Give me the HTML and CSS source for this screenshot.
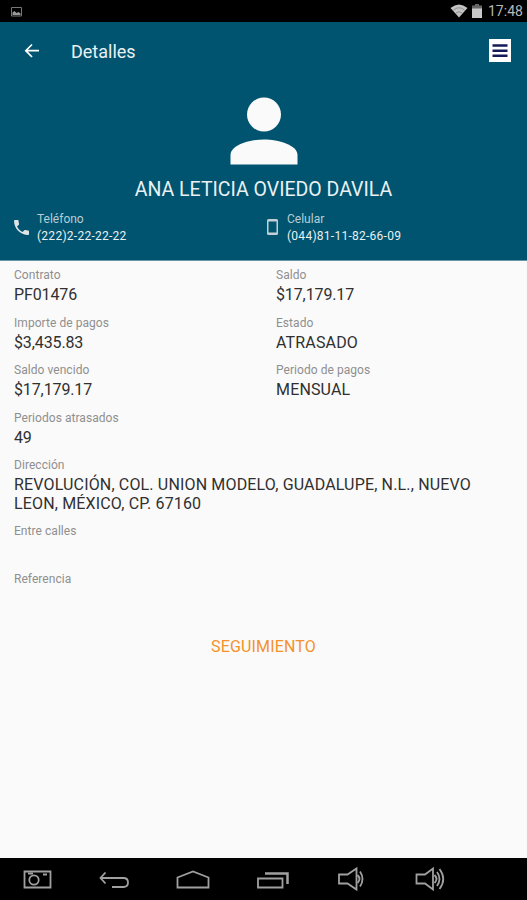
FILE: index.html
```html
<!DOCTYPE html>
<html lang="es">
<head>
    <meta charset="UTF-8">
    <meta name="viewport" content="width=device-width, initial-scale=1.0">
    <title>Detalles</title>
    <link rel="stylesheet" href="styles.css">
</head>
<body>

    <!-- Status bar -->
    <div class="status-bar">
        <svg class="status-picture" width="11" height="10" viewBox="0 0 11 10">
            <path d="M.5 .5h10v8.500h-10z" fill="none" stroke="#777"/>
            <path d="M1.500 8V5.500l2-1.500 2 2 2-1 2 1.500V8z" fill="#999"/>
        </svg>
        <svg class="status-wifi" width="18" height="14" viewBox="0 0 18 14">
            <path d="M9 13.500L.5 4Q9-3 17.500 4z" fill="#c4c4c4"/>
            <path d="M3.500 6Q9 1.500 14.500 6M6 9Q9 6.500 12 9" fill="none" stroke="#777" stroke-width=".7"/>
        </svg>
        <svg class="status-battery" width="10" height="14" viewBox="0 0 10 14">
            <path d="M3 0h4v1.500h3V5H0V1.500h3z" fill="#666"/>
            <path d="M0 4.500h10V14H0z" fill="#c8c8c8"/>
        </svg>
        <span class="clock">17:48</span>
    </div>

    <!-- Header with the client data -->
    <header class="header">
        <div class="toolbar">
            <svg class="back-icon" width="16" height="16" viewBox="0 0 16 16">
                <path d="M15 7.700H2M8 1.500L1.800 7.700 8 14" fill="none" stroke="#fff" stroke-width="1.700"/>
            </svg>
            <h1>Detalles</h1>
            <svg class="menu-icon" width="22" height="23" viewBox="0 0 22 23">
                <path d="M0 0h22v23H0z" fill="#fff"/>
                <path d="M3.500 6.500h15M3.500 11.700h15M3.500 16.800h15" stroke="#141c58" stroke-width="2.400"/>
            </svg>
        </div>

        <svg class="avatar" width="68" height="68" viewBox="0 0 68 68">
            <circle cx="34" cy="17.500" r="17" fill="#fafafa"/>
            <path d="M.5 67.500V58C.5 48 20 42.500 34 42.500S67.500 48 67.500 58v9.500z" fill="#fafafa"/>
        </svg>
        <h2>ANA LETICIA OVIEDO DAVILA</h2>

        <div class="phones">
            <div class="phone">
                <svg class="phone-icon" width="15" height="15" viewBox="3 3 18 18">
                    <path d="M6.620 10.790c1.440 2.830 3.760 5.140 6.590 6.590l2.200-2.200c.270-.270.670-.360 1.020-.240 1.120.370 2.330.570 3.570.570.550 0 1 .450 1 1V20c0 .550-.450 1-1 1C10.610 21 3 13.390 3 4c0-.550.450-1 1-1h3.500c.550 0 1 .450 1 1 0 1.250.200 2.450.570 3.570.110.350.030.740-.250 1.020z" fill="#dfe4e7"/>
                </svg>
                <div>
                    <div class="phone-label">Teléfono</div>
                    <div class="phone-number">(222)2-22-22-22</div>
                </div>
            </div>
            <div class="phone">
                <svg class="cell-icon" width="11" height="16" viewBox="0 0 11 16">
                    <path d="M1.500 0h8Q11 0 11 1.500v13Q11 16 9.500 16h-8Q0 16 0 14.500v-13Q0 0 1.500 0zM1.500 2.500v11h8v-11z" fill="#c3cfd4" fill-rule="evenodd"/>
                </svg>
                <div>
                    <div class="phone-label">Celular</div>
                    <div class="phone-number">(044)81-11-82-66-09</div>
                </div>
            </div>
        </div>
    </header>

    <!-- Contract details -->
    <main class="details">
        <div class="field">
            <div class="label">Contrato</div>
            <div class="value number">PF01476</div>
        </div>
        <div class="field">
            <div class="label">Saldo</div>
            <div class="value number">$17,179.17</div>
        </div>
        <div class="field">
            <div class="label">Importe de pagos</div>
            <div class="value number">$3,435.83</div>
        </div>
        <div class="field">
            <div class="label">Estado</div>
            <div class="value">ATRASADO</div>
        </div>
        <div class="field">
            <div class="label">Saldo vencido</div>
            <div class="value number">$17,179.17</div>
        </div>
        <div class="field">
            <div class="label">Periodo de pagos</div>
            <div class="value">MENSUAL</div>
        </div>
        <div class="field wide">
            <div class="label">Periodos atrasados</div>
            <div class="value number">49</div>
        </div>
        <div class="field wide">
            <div class="label">Dirección</div>
            <div class="value">REVOLUCIÓN, COL. UNION MODELO, GUADALUPE, N.L., NUEVO<br>LEON, MÉXICO, CP. 67160</div>
        </div>
        <div class="field wide">
            <div class="label">Entre calles</div>
            <div class="value"></div>
        </div>
        <div class="field wide">
            <div class="label">Referencia</div>
            <div class="value"></div>
        </div>
        <button type="button" class="follow-button wide">SEGUIMIENTO</button>
    </main>

    <!-- Navigation bar -->
    <nav class="nav-bar">
        <svg width="40" height="42" viewBox="0 0 40 42">
            <path d="M6.500 13.500h26v16h-26z"/>
            <circle cx="16" cy="22" r="4.700"/>
            <path d="M10 15.500h5M25 16.500h4" stroke-width="2"/>
        </svg>
        <svg width="40" height="42" viewBox="0 0 40 42">
            <path d="M9.500 14.500L4.500 20l5 5.500M5 20h22.500q4.500 0 4.500 4.500T27.500 29H16"/>
        </svg>
        <svg width="40" height="42" viewBox="0 0 40 42">
            <path d="M3.500 29.500V19.500L19 13.500l15.500 6v10z"/>
        </svg>
        <svg width="40" height="42" viewBox="0 0 40 42">
            <path d="M6 20.500h24.500v9H6z"/>
            <path d="M13 15.500h22.500V26" stroke-width="2.500"/>
        </svg>
        <svg width="40" height="42" viewBox="0 0 40 42">
            <path d="M9 16.500h8.500l9-6v21l-9-6H9z"/>
            <path d="M27.500 17q4 4 0 8M30 13.500q5 7.500 0 15"/>
        </svg>
        <svg width="40" height="42" viewBox="0 0 40 42">
            <path d="M8.500 16.500H17l8-6v21l-8-6H8.500z"/>
            <path d="M26.500 17q4 4 0 8M29 14q5 7 0 14M31.500 11q7.500 10 0 20"/>
        </svg>
    </nav>

</body>
</html>
```

FILE: styles.css
```css
* {
    box-sizing: border-box;
}

body {
    display: flex;
    flex-direction: column;
    height: 900px;
    margin: 0;
    background-color: #fafafa;
    font-family: Roboto, "Liberation Sans", sans-serif;
    overflow: hidden;
}

/* Status bar */
.status-bar {
    display: flex;
    align-items: flex-start;
    height: 22px;
    padding: 4px 4px 0 11px;
    background-color: #000;
}

.status-picture {
    margin-top: 3px;
}

.status-wifi {
    margin-left: auto;
}

.status-battery {
    margin: 0 6px 0 4px;
}

.clock {
    width: 35px;
    color: #b8b8b8;
    font-size: 14px;
    line-height: 15px;
}

/* Header */
.header {
    height: 239px;
    background-color: #00546f;
    border-bottom: 1px solid #6796a7;
    color: #eaf0f3;
}

.toolbar {
    display: flex;
    align-items: center;
    height: 57px;
    padding: 0 16px 0 24px;
}

.back-icon {
    margin-right: 31px;
}

.toolbar h1 {
    margin: 2px 0 0;
    font-size: 18px;
    font-weight: 400;
}

.menu-icon {
    margin-left: auto;
}

.avatar {
    display: block;
    margin: 18px auto 0;
}

.header h2 {
    margin: 13px 0 0;
    font-size: 19.5px;
    font-weight: 400;
    line-height: 24px;
    text-align: center;
}

.phones {
    display: grid;
    grid-template-columns: 250px 1fr;
    margin-top: 9px;
    padding-left: 14px;
}

.phone {
    display: flex;
}

.phone-icon {
    margin: 9px 8px 0 0;
}

.cell-icon {
    margin: 8px 9px 0 3px;
}

.phone-label {
    color: #b9cdd5;
    font-size: 12px;
    line-height: 17px;
}

.phone-number {
    font-size: 12px;
    letter-spacing: 0.26px;
    line-height: 17px;
}

/* Details */
.details {
    display: grid;
    grid-template-columns: 262px 1fr;
    align-content: start;
    flex: 1;
    padding: 7px 14px 0;
}

.wide {
    grid-column: 1 / 3;
}

.field {
    min-height: 47.5px;
    padding-bottom: 11px;
}

.label {
    margin-bottom: 4px;
    color: #8f8f8f;
    font-size: 12px;
    letter-spacing: 0.05px;
    line-height: 14px;
}

.value {
    color: #303030;
    font-size: 16px;
    letter-spacing: 0.16px;
    line-height: 18.5px;
}

.number {
    letter-spacing: -0.12px;
}

.follow-button {
    justify-self: center;
    margin-top: 18px;
    padding: 0;
    border: none;
    background: none;
    color: #f3922b;
    font-family: inherit;
    font-size: 16px;
    letter-spacing: 0.15px;
    line-height: 20px;
}

/* Navigation bar */
.nav-bar {
    display: flex;
    gap: 38px;
    height: 42px;
    padding-left: 18px;
    background-color: #000;
}

.nav-bar svg {
    fill: none;
    stroke: #a0a0a0;
    stroke-width: 1.8;
}
```
